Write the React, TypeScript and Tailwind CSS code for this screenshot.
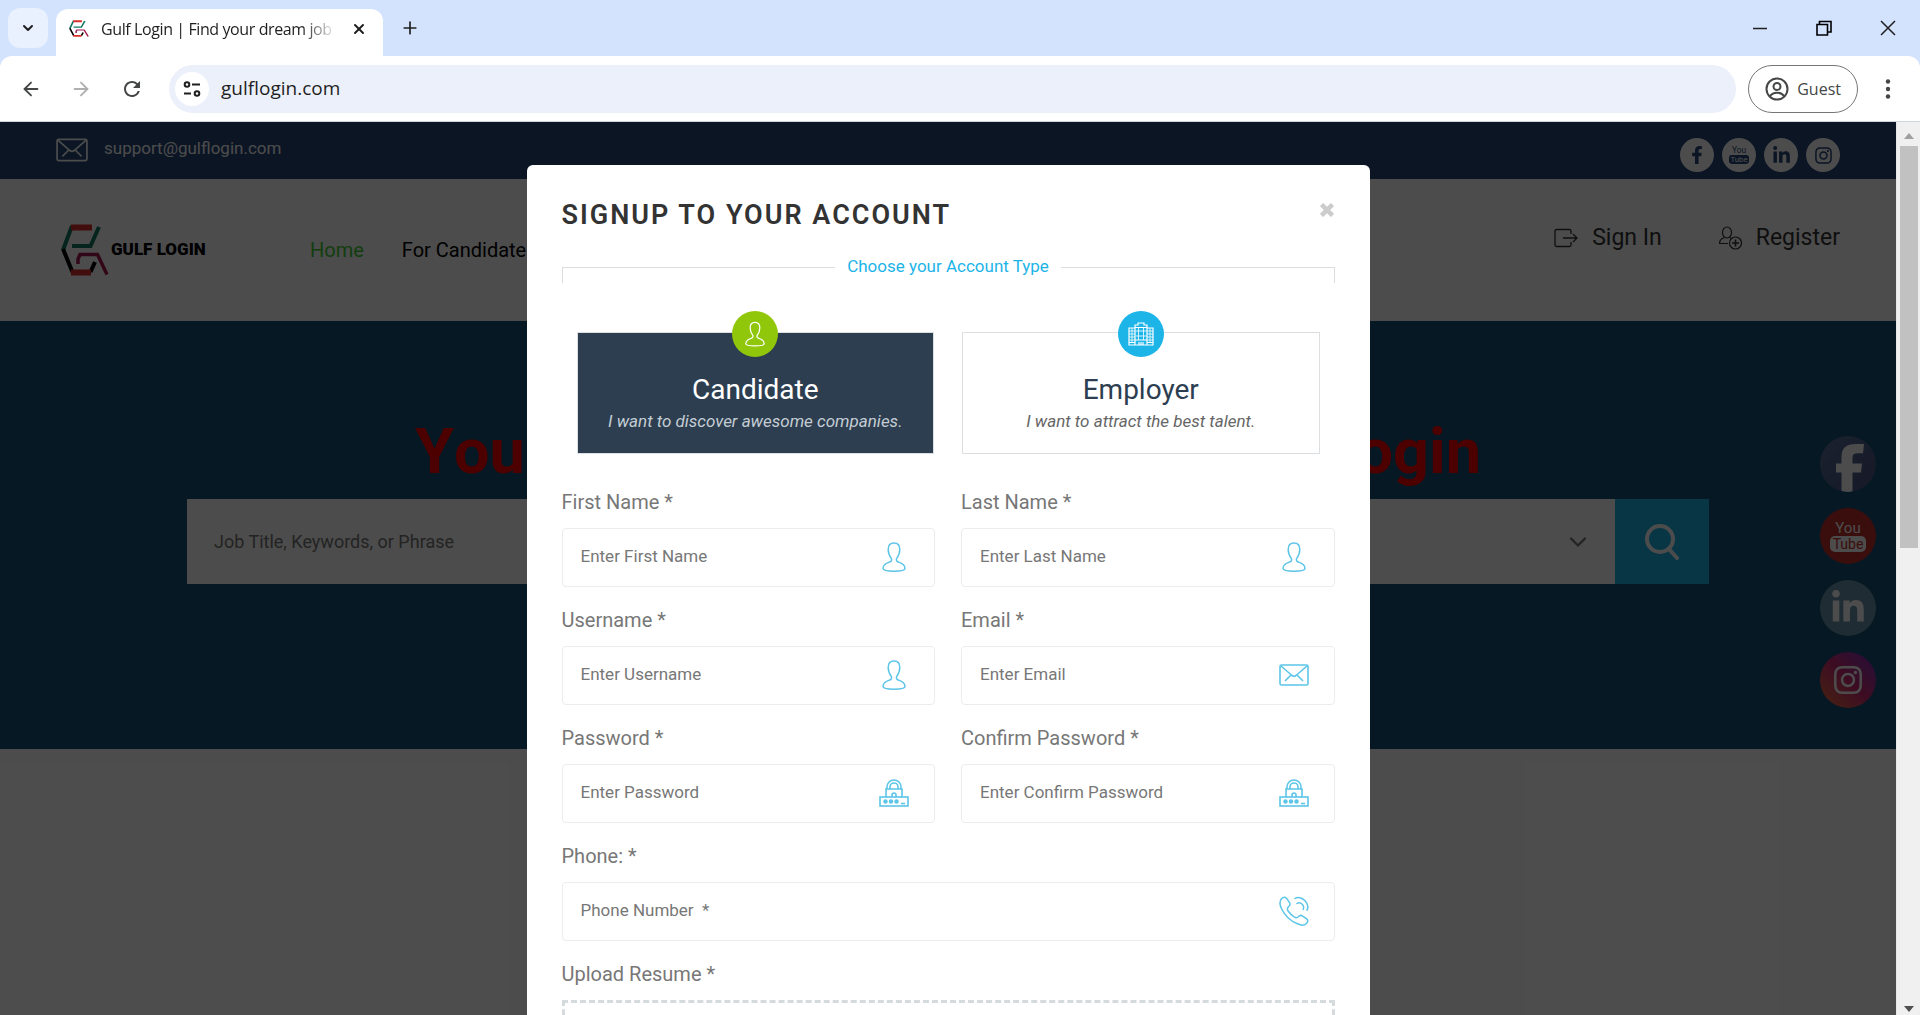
import React, { ReactNode, useState } from 'react';
import { ArrowLeft, ArrowRight, ChevronDown, Plus, X } from 'lucide-react';
import { FaFacebookF, FaInstagram, FaLinkedinIn } from 'react-icons/fa';
import { MdRefresh } from 'react-icons/md';

type AccountType = 'candidate' | 'employer';

interface IconProps {
  className?: string;
}

function LogoMark({ className }: IconProps) {
  return (
    <svg className={className} viewBox="0 0 48 52" fill="none" strokeWidth="4" preserveAspectRatio="none">
      <path d="M11 2L2 26M38 3L29.500 22H11" stroke="#127a62" />
      <path d="M2 25l9.500 23M34 38l-4.500 10" stroke="#000" />
      <path d="M10 3.500h21M10 48.500h20" stroke="#d9302c" strokeWidth="6" />
      <path d="M17 40v-5l2-4.500h17.500L46 50.500" stroke="#a3174f" strokeWidth="3.500" />
    </svg>
  );
}

function EnvelopeIcon({ className }: IconProps) {
  return (
    <svg className={className} viewBox="0 0 30 22" fill="none" stroke="currentColor" strokeWidth="1.6">
      <rect x="1" y="1" width="28" height="20" rx="1.5" />
      <path d="M2 2l11 9.500q2 1.500 4 0L28 2M6 17l6-6M24 17l-6-6" />
    </svg>
  );
}

function PersonIcon({ className }: IconProps) {
  return (
    <svg className={className} viewBox="0 0 24 30" fill="none" stroke="currentColor" strokeWidth="1.500">
      <path d="M12 1c-4 0-5.800 2.600-5.800 6.600 0 4.400 1.600 7 3.200 9 .8 2-.4 3-2.600 3.800C3.500 21.600 1 23 1 26.600 1 28.600 6 29.200 12 29.200s11-.6 11-2.600c0-3.600-2.500-5-5.800-6.200-2.200-.8-3.400-1.800-2.600-3.800 1.600-2 3.200-4.600 3.200-9C17.800 3.600 16 1 12 1z" />
    </svg>
  );
}

function PasswordIcon({ className }: IconProps) {
  return (
    <svg className={className} viewBox="0 0 30 28" fill="none" stroke="currentColor" strokeWidth="1.600">
      <path d="M8 10V8a7 7 0 0114 0v2M11 10V8a4 4 0 018 0v2" />
      <path d="M8 18l-1-1v-7h16v7l-1 1M13 18v-2a2 2 0 014 0v2" />
      <rect x="1" y="18" width="28" height="9" />
      <path d="M22 24.500h4" />
      <g fill="currentColor" stroke="none">
        <circle cx="6.500" cy="22.500" r="2.200" />
        <circle cx="12" cy="22.500" r="2.200" />
        <circle cx="17.500" cy="22.500" r="2.200" />
      </g>
    </svg>
  );
}

function PhoneIcon({ className }: IconProps) {
  return (
    <svg className={className} viewBox="0 0 30 30" fill="none" stroke="currentColor" strokeWidth="1.500" strokeLinecap="round">
      <path d="M2.500 2.800C4 1.200 6 .8 7.500 2.200l3 4.400c1 1.600.4 3-1 4.200-1.500 1.400-1.500 2.600-.4 4.200 2 2.800 4 4.700 6.400 6.200 1.600 1 2.700.8 4-.6 1.200-1.400 2.700-1.600 4.200-.5l4 2.700c1.500 1.200 1.300 2.900.2 4.200-2 2.600-5.600 2.600-9.400.8C11.500 25 5.500 19 2.300 12.200.7 8.600.3 5.200 2.500 2.800z" />
      <path d="M16 2.500c2.500-1.800 7-1 9.800 2 2.900 3 3.600 7 2.200 9.800M18 7.500c1.500-1 3.800-.6 5.200.8 1.500 1.500 1.700 3.600.9 5.200" />
    </svg>
  );
}

function BuildingIcon({ className }: IconProps) {
  return (
    <svg className={className} viewBox="0 0 26 24" fill="none" stroke="currentColor" strokeWidth="1.200">
      <path d="M7 23V3h3V1h6v2h3v20M7 6H1v17h24V6h-6M1 20.500h6M19 20.500h6M7 5.500h12M7 18h12" />
      <path d="M10.500 6v12M15.500 6v12M7.500 9h11M7.500 14h11M1 9h6M1 12h6M1 15h6M1 18h6M19 9h6M19 12h6M19 15h6M19 18h6M4 6v14M22 6v14" strokeWidth=".8" />
      <path d="M11 23v-3M13 23v-3M15 23v-3" />
    </svg>
  );
}

function SignInIcon({ className }: IconProps) {
  return (
    <svg className={className} viewBox="0 0 24 20" fill="none" stroke="currentColor" strokeWidth="1.300">
      <path d="M17 6V3a1.500 1.500 0 00-1.500-1.500h-13A1.500 1.500 0 001 3v14a1.500 1.500 0 001.500 1.500h13A1.500 1.500 0 0017 17v-3" />
      <path d="M9 10h14M19 6l4 4-4 4" />
    </svg>
  );
}

function RegisterIcon({ className }: IconProps) {
  return (
    <svg className={className} viewBox="0 0 23 24" fill="none" stroke="currentColor" strokeWidth="1.200">
      <ellipse cx="8" cy="6.500" rx="4.500" ry="5.500" />
      <path d="M5.500 11.500c-3 1-5 2.500-5 6h8.500M10.500 11.500l2.500 1" />
      <circle cx="16.500" cy="17" r="6" />
      <path d="M16.500 13.500v7M13 17h7" strokeWidth="1.600" />
    </svg>
  );
}

// Stacked "You / Tube" badge, the lower word sits on a plate in the glyph colour
function YoutubeIcon({ className, plate, cut }: IconProps & { plate: string; cut: string }) {
  return (
    <svg className={className} viewBox="0 0 36 36" fontFamily="Roboto, sans-serif" textAnchor="middle">
      <text x="18" y="15" fontSize="15" fill={plate}>You</text>
      <rect x="0" y="18" width="36" height="16" rx="5" fill={plate} />
      <text x="18" y="31" fontSize="14" fill={cut}>Tube</text>
    </svg>
  );
}

function TuneIcon({ className }: IconProps) {
  return (
    <svg className={className} viewBox="0 0 18 18" fill="none" stroke="currentColor" strokeWidth="2">
      <circle cx="4" cy="4.500" r="2.300" />
      <path d="M9 4.500h8M1 13.500h7" />
      <circle cx="14" cy="13.500" r="2.300" />
    </svg>
  );
}

function BrowserChrome() {
  return (
    <div className="shrink-0 bg-[#d3e2fd] font-['Open_Sans','Noto_Sans',sans-serif] text-[#1f1f1f]">
      <div className="flex h-14 items-end justify-between">
        <div className="flex h-full items-end">
          <button aria-label="Search tabs" className="mb-2 ml-2 flex size-10 items-center justify-center rounded-xl bg-[#e9f0fe]">
            <ChevronDown className="size-4" strokeWidth={3} />
          </button>
          <div className="ml-2 flex h-[47px] w-[327px] items-center rounded-t-xl bg-white pb-2 pl-[13px] pr-4">
            <LogoMark className="h-[17px] w-5 shrink-0" />
            <span className="ml-3 w-[236px] overflow-hidden whitespace-nowrap text-base tracking-tight [mask-image:linear-gradient(to_right,black_85%,transparent)]">
              Gulf Login | Find your dream job
            </span>
            <button aria-label="Close tab" className="ml-auto">
              <X className="size-4" strokeWidth={3} />
            </button>
          </div>
          <button aria-label="New tab" className="mb-[18px] ml-[17px]">
            <Plus className="size-5" />
          </button>
        </div>
        <div className="flex h-full items-center gap-11 pr-[22px]">
          <button aria-label="Minimize">
            <svg className="size-5" viewBox="0 0 20 20" stroke="#1f1f1f" strokeWidth="1.500"><path d="M3 10.500h14" /></svg>
          </button>
          <button aria-label="Restore">
            <svg className="size-5" viewBox="0 0 20 20" fill="none" stroke="#000" strokeWidth="1.600"><path d="M3 6.500h10.500V17H3zM5.500 6V3.500H17V14h-3" /></svg>
          </button>
          <button aria-label="Close window">
            <svg className="size-5" viewBox="0 0 20 20" stroke="#1f1f1f" strokeWidth="1.500"><path d="M3 3l14 14M17 3L3 17" /></svg>
          </button>
        </div>
      </div>
      <div className="flex h-[66px] items-center rounded-t-xl border-b border-gray-300 bg-white pl-5 pr-[22px]">
        <div className="flex items-center gap-7 text-[#444746]">
          <button aria-label="Back"><ArrowLeft className="size-[22px]" /></button>
          <button aria-label="Forward" className="text-[#b0b0b0]"><ArrowRight className="size-[22px]" /></button>
          <button aria-label="Reload"><MdRefresh className="size-6" /></button>
        </div>
        <div className="ml-[25px] flex h-12 flex-1 items-center rounded-full bg-[#ecf0fa] pl-1.5">
          <button aria-label="View site information" className="flex size-[34px] items-center justify-center rounded-full bg-white">
            <TuneIcon className="size-[18px]" />
          </button>
          <input aria-label="Address" defaultValue="gulflogin.com" className="ml-3 flex-1 bg-transparent text-[19px] outline-none" />
        </div>
        <button className="ml-3 flex h-12 items-center gap-2 rounded-full border border-[#747775] px-4 text-base text-[#444746]">
          <svg className="size-6" viewBox="0 0 24 24" fill="none" stroke="currentColor" strokeWidth="2">
            <circle cx="12" cy="12" r="10.500" />
            <circle cx="12" cy="9.500" r="3.500" />
            <path d="M5 19c3-4.500 11-4.500 14 0" />
          </svg>
          Guest
        </button>
        <button aria-label="Menu" className="ml-5">
          <svg className="size-5" viewBox="0 0 20 20" fill="#444746">
            <circle cx="10" cy="2.500" r="2.200" />
            <circle cx="10" cy="10" r="2.200" />
            <circle cx="10" cy="17.500" r="2.200" />
          </svg>
        </button>
      </div>
    </div>
  );
}

function TopBar() {
  const link = 'flex size-[34px] items-center justify-center rounded-full bg-white text-[#254678]';
  return (
    <div className="flex h-[57px] items-start justify-between bg-[#254678] px-14 pt-4">
      <a href="mailto:support@gulflogin.com" className="flex gap-4 text-[17px]/5 text-white">
        <EnvelopeIcon className="h-6 w-8" />
        support@gulflogin.com
      </a>
      <div className="flex gap-2">
        <a href="#facebook" aria-label="Facebook" className={link}><FaFacebookF className="size-[18px]" /></a>
        <a href="#youtube" aria-label="YouTube" className={link}><YoutubeIcon className="size-5" plate="#254678" cut="#ffffff" /></a>
        <a href="#linkedin" aria-label="LinkedIn" className={link}><FaLinkedinIn className="size-[19px]" /></a>
        <a href="#instagram" aria-label="Instagram" className={link}><FaInstagram className="size-[19px]" /></a>
      </div>
    </div>
  );
}

function Header() {
  return (
    <header className="flex h-[142px] justify-between bg-white pl-[61px] pr-14">
      <div className="flex items-center">
        <a href="#home" className="flex w-[249px] items-center gap-0.5 text-black">
          <LogoMark className="h-[52px] w-12" />
          <span className="whitespace-nowrap text-[17px] font-black">GULF LOGIN</span>
        </a>
        <nav className="flex gap-[38px] text-xl text-black">
          <a href="#home" className="text-[#3fcf33]">Home</a>
          <a href="#candidates" className="whitespace-nowrap">For Candidates</a>
        </nav>
      </div>
      <div className="flex items-start gap-[57px] pt-[42px] text-[23px]/[34px] text-[#333]">
        <a href="#signin" className="flex items-center gap-3.5">
          <SignInIcon className="h-5 w-6" />
          Sign In
        </a>
        <a href="#register" className="flex items-center gap-3.5">
          <RegisterIcon className="h-6 w-[23px]" />
          Register
        </a>
      </div>
    </header>
  );
}

function Hero() {
  const badge = 'flex size-14 justify-center overflow-hidden rounded-full text-white';
  return (
    <section className="relative h-[428px] bg-[#115078] px-[187px] pt-24">
      <h1 className="flex justify-between px-[228px] text-[63px]/[70px] font-bold text-[#ff0000] [font-kerning:none]">
        <span>Your</span>
        <span>Login</span>
      </h1>
      <form className="mt-3 flex h-[85px] bg-white">
        <input aria-label="Job title" placeholder="Job Title, Keywords, or Phrase" className="flex-1 bg-transparent px-[27px] text-lg outline-none placeholder:text-[#777]" />
        <div className="flex flex-1 items-center justify-end pr-[23px] text-[#777]">
          <ChevronDown className="size-7" strokeWidth={2} />
        </div>
        <button type="button" aria-label="Search" className="flex w-[94px] items-center justify-center bg-[#1db4e8] text-white">
          <svg className="size-9" viewBox="0 0 36 36" fill="none" stroke="currentColor" strokeWidth="4" strokeLinecap="round">
            <circle cx="16" cy="15" r="13" />
            <path d="M25 25l8 9" />
          </svg>
        </button>
      </form>
      <div className="absolute right-5 top-[115px] flex flex-col gap-4">
        <a href="#facebook" aria-label="Facebook" className={`${badge} items-end bg-linear-to-br from-[#5a6f9c] to-[#4a5584]`}>
          <svg className="ml-1 h-12 w-7" viewBox="0 0 28 47" fill="currentColor" preserveAspectRatio="none">
            <path d="M5.500 47V28H0v-9h5.500v-6C5.500 4 10 0 20 0h8l-1 9h-4c-5 0-6.500 1-6.500 5v5H26l-1 9h-8.500v19z" />
          </svg>
        </a>
        <a href="#youtube" aria-label="YouTube" className={`${badge} items-center bg-[#c4302b]`}>
          <YoutubeIcon className="size-9" plate="#ffffff" cut="#c4302b" />
        </a>
        <a href="#linkedin" aria-label="LinkedIn" className={`${badge} items-center bg-[#6895ad]`}>
          <FaLinkedinIn className="size-9" />
        </a>
        <a href="#instagram" aria-label="Instagram" className={`${badge} items-center bg-linear-to-tr from-[#f07020] via-[#cf2872] to-[#7a1ac0]`}>
          <FaInstagram className="size-8" />
        </a>
      </div>
    </section>
  );
}

interface AccountCardProps {
  title: string;
  subtitle: string;
  icon: ReactNode;
  selected: boolean;
  onSelect: () => void;
}

function AccountCard({ title, subtitle, icon, selected, onSelect }: AccountCardProps) {
  return (
    <button
      type="button"
      aria-pressed={selected}
      onClick={onSelect}
      className={`relative flex h-[122px] flex-col items-center border border-[#dcdfe2] pt-[41px] ${
        selected ? 'bg-[#2c3e50] text-white' : 'bg-white text-[#2c3e50]'
      }`}
    >
      <span
        className={`absolute -top-[22px] flex size-[46px] items-center justify-center rounded-full text-white ${
          selected ? 'bg-[#91c70a]' : 'bg-[#1db4e8]'
        }`}
      >
        {icon}
      </span>
      <span className="text-[28px]/8">{title}</span>
      <span className={`text-[17px]/[30px] italic ${selected ? 'text-[#c5cdd4]' : 'text-[#666]'}`}>{subtitle}</span>
    </button>
  );
}

interface FieldProps {
  id: string;
  label: string;
  placeholder: string;
  icon: ReactNode;
  type?: string;
  wide?: boolean;
}

function Field({ id, label, placeholder, icon, type = 'text', wide }: FieldProps) {
  return (
    <div className={wide ? 'col-span-2' : ''}>
      <label htmlFor={id} className="block text-xl/6 text-[#777]">{label}</label>
      <div className="mt-3.5 flex h-[59px] items-center rounded-sm border border-[#ececec] pb-px pl-[18px] pr-6 text-[#5cc5e8]">
        <input
          id={id}
          type={type}
          placeholder={placeholder}
          className="min-w-0 flex-1 text-[17px] text-[#555] outline-none placeholder:text-[#777]"
        />
        <span className="flex w-8 justify-center">{icon}</span>
      </div>
    </div>
  );
}

function SignupModal() {
  const [accountType, setAccountType] = useState<AccountType>('candidate');

  return (
    <div role="dialog" aria-labelledby="signup-title" className="h-[1200px] w-[843px] rounded-md bg-white px-[35px] pt-8">
      <div className="flex items-start justify-between">
        <h2 id="signup-title" className="text-[27px]/9 font-semibold tracking-[2px] text-[#333]">SIGNUP TO YOUR ACCOUNT</h2>
        <button aria-label="Close" className="pr-px pt-1.5 text-[#ccc]">
          <svg className="size-3.5" viewBox="0 0 14 14" stroke="currentColor" strokeWidth="4.500"><path d="M1.500 1.500l11 11M12.500 1.500l-11 11" /></svg>
        </button>
      </div>

      <div className="mt-[18px] flex h-8 items-center gap-3">
        <div className="h-4 flex-1 self-end border-l border-t border-[#ddd]" />
        <span className="text-[17px] text-[#1db4e8]">Choose your Account Type</span>
        <div className="h-4 flex-1 self-end border-r border-t border-[#ddd]" />
      </div>

      <div className="mt-[49px] grid grid-cols-2 gap-7 px-[15px]">
        <AccountCard
          title="Candidate"
          subtitle="I want to discover awesome companies."
          icon={<PersonIcon className="h-[26px] w-5" />}
          selected={accountType === 'candidate'}
          onSelect={() => setAccountType('candidate')}
        />
        <AccountCard
          title="Employer"
          subtitle="I want to attract the best talent."
          icon={<BuildingIcon className="h-6 w-[26px]" />}
          selected={accountType === 'employer'}
          onSelect={() => setAccountType('employer')}
        />
      </div>

      <form className="mt-9 grid grid-cols-2 gap-x-[26px] gap-y-[21px]">
        <Field id="first-name" label="First Name *" placeholder="Enter First Name" icon={<PersonIcon className="h-[30px] w-6" />} />
        <Field id="last-name" label="Last Name *" placeholder="Enter Last Name" icon={<PersonIcon className="h-[30px] w-6" />} />
        <Field id="username" label="Username *" placeholder="Enter Username" icon={<PersonIcon className="h-[30px] w-6" />} />
        <Field id="email" label="Email *" placeholder="Enter Email" type="email" icon={<EnvelopeIcon className="h-[22px] w-[30px]" />} />
        <Field id="password" label="Password *" placeholder="Enter Password" type="password" icon={<PasswordIcon className="h-7 w-[30px]" />} />
        <Field id="confirm-password" label="Confirm Password *" placeholder="Enter Confirm Password" type="password" icon={<PasswordIcon className="h-7 w-[30px]" />} />
        <Field id="phone" label="Phone: *" placeholder="Phone Number  *" type="tel" wide icon={<PhoneIcon className="size-[30px]" />} />
        <div className="col-span-2">
          <label htmlFor="resume" className="block text-xl/6 text-[#777]">Upload Resume *</label>
          <div className="mt-3.5 h-36 border-3 border-dashed border-[#d5dadc]">
            <input id="resume" type="file" className="size-full opacity-0" />
          </div>
        </div>
      </form>
    </div>
  );
}

function Scrollbar() {
  return (
    <div className="flex w-6 shrink-0 flex-col items-center justify-between border-l border-gray-200 bg-[#f0f0f0]">
      <svg className="mt-2 h-3 w-3 shrink-0" viewBox="0 0 12 12" fill="#a0a0a0"><path d="M1 9l5-6 5 6z" /></svg>
      <div className="mb-auto mt-1 h-[55%] max-h-[402px] w-[18px] shrink-0 bg-[#c1c1c1]" />
      <svg className="h-3 w-3 shrink-0" viewBox="0 0 12 12" fill="#505050"><path d="M1 3l5 6 5-6z" /></svg>
    </div>
  );
}

export default function App() {
  return (
    <div className="flex h-screen flex-col overflow-hidden font-['Roboto',sans-serif]">
      <BrowserChrome />
      <div className="flex min-h-0 flex-1">
        <main className="relative min-w-0 flex-1 overflow-hidden bg-white">
          <TopBar />
          <Header />
          <Hero />
          <div className="absolute inset-0 flex items-start justify-center bg-black/70 pt-[43px]">
            <SignupModal />
          </div>
        </main>
        <Scrollbar />
      </div>
    </div>
  );
}
